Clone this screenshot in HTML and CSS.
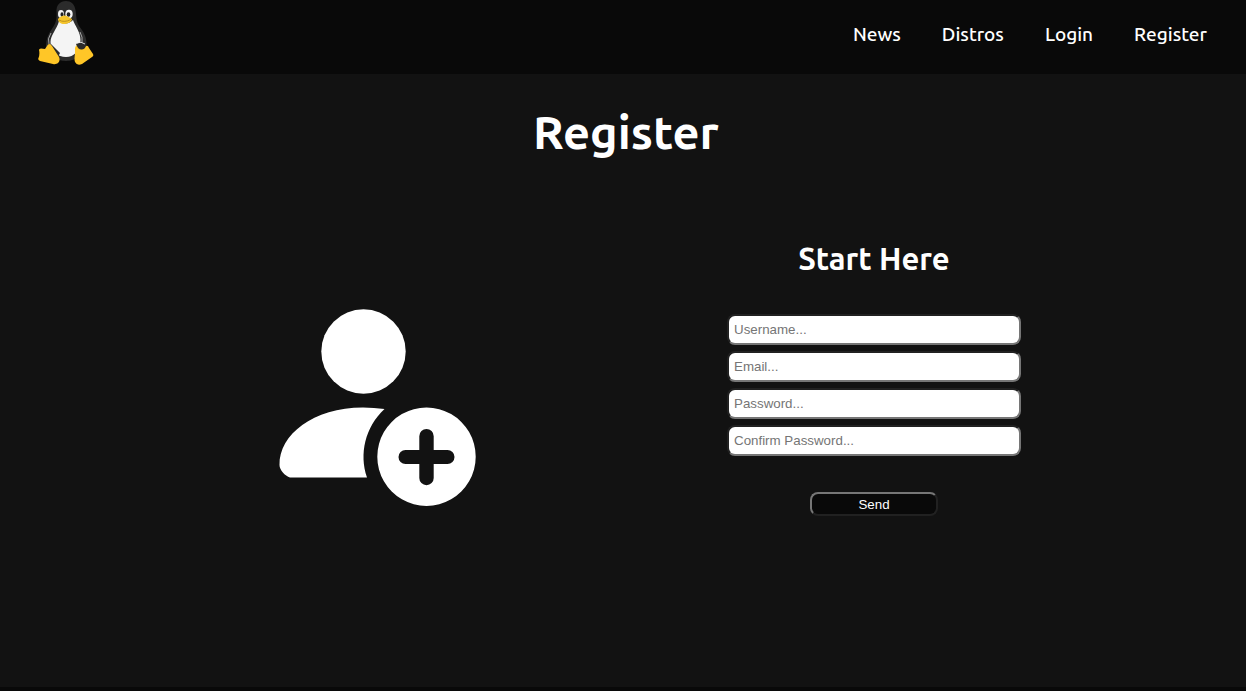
FILE: index.html
```html
<!DOCTYPE html>
<html lang="en">
<head>
  <meta charset="utf-8">
  <meta name="viewport" content="width=device-width, initial-scale=1">
  <title>Register</title>
  <link rel="stylesheet" href="styles.css">
</head>
<body>
  <header class="navbar">
    <a class="logo" href="#" aria-label="Home">
      <svg class="tux" viewBox="0 0 56 64" aria-hidden="true">
        <path fill="#2b2b2b" d="M28 0C22 0 18 4 18.500 11C19 18 18 22 14.500 27C10 33 8 39 8 45C10 55 18 60 28 60C38 60 47 53 48.500 44C49 36 45 30 41 25C38 20 38.500 15 37.500 9C36.500 3 33 0 28 0Z"/>
        <path fill="#f4f4f4" d="M21 20C26 24 31 23 35 19C37 25 42.500 31 42.500 39C42 50 36 56 28 56C20 56 12.500 50 12.500 41C12.500 34 19 28 21 20Z"/>
        <path fill="none" stroke="#ddd" stroke-width=".7" d="M13 32Q9 38 11 43M42 31Q45 36 44 42"/>
        <ellipse cx="23" cy="13" rx="3" ry="4" fill="#f4f4f4"/>
        <ellipse cx="31" cy="13" rx="3.700" ry="4.300" fill="#f4f4f4"/>
        <ellipse cx="24" cy="13.500" rx="1.500" ry="2.200" fill="#222"/>
        <ellipse cx="30.500" cy="13.500" rx="1.800" ry="2.300" fill="#222"/>
        <path fill="#f5c52c" d="M20 18C22 16 24 14.500 27 14.500C29 14.500 32 17 34 18C34 21 29 23 26 23C23 23 20 21 20 18Z"/>
        <path fill="none" stroke="#a37a14" stroke-width=".7" d="M21 19Q26 22 33 18.500"/>
        <path fill="#2b2b2b" d="M13 43L22 52L20 56L12 47Z"/>
        <path fill="#ffc627" d="M1 49Q1 47.500 3 47.500L7 48L10 43.500Q12 42 14 45L21 56C23 61 19 64 15 63L2 60Q-.500 59 .500 57Q2 53 1 49Z"/>
        <path fill="#ffc627" d="M37 47Q38 43 41 45Q45 49 48 45Q50 44 51 47L55 53Q56 55 54 56L44 63Q39 65 37 61Q36 58 37 53Z"/>
        <path fill="#2b2b2b" d="M38 43Q43 40 48 43Q48 48 44 48.500Q40 49 38 43Z"/>
        <path fill="none" stroke="#eee" stroke-width=".9" d="M39 42Q43 40 47 43"/>
      </svg>
    </a>
    <nav class="nav-links">
      <a href="#">News</a>
      <a href="#">Distros</a>
      <a href="#">Login</a>
      <a href="#">Register</a>
    </nav>
  </header>
  <main class="page">
    <h1 class="page-title">Register</h1>
    <div class="columns">
      <svg class="person-add" viewBox="0 0 198 198" role="img" aria-label="Add user">
        <circle cx="84.500" cy="42.500" r="42.200"/>
        <path d="M84 98.500Q95 98.500 105.500 100C86 118 80 145 88 168.500H11C6 167 .500 161 .500 156C0 126 34 98.500 84 98.500Z"/>
        <path fill-rule="evenodd" d="M147.500 98.500a49.200 49.200 0 1 0 .01 0ZM147.500 120a7.200 7.200 0 0 1 7.200 7.200V141H168.500a7 7 0 0 1 0 14H154.700V169a7.200 7.200 0 0 1-14.400 0V155H126.500a7 7 0 0 1 0-14H140.300V127.200a7.200 7.200 0 0 1 7.200-7.200Z"/>
      </svg>
      <form class="register-form">
        <h2 class="form-title">Start Here</h2>
        <input class="field" type="text" placeholder="Username..." aria-label="Username">
        <input class="field" type="email" placeholder="Email..." aria-label="Email">
        <input class="field" type="password" placeholder="Password..." aria-label="Password">
        <input class="field" type="password" placeholder="Confirm Password..." aria-label="Confirm password">
        <button class="send" type="button">Send</button>
      </form>
    </div>
  </main>
  <footer class="footer"></footer>
</body>
</html>
```
FILE: styles.css
```css
* {
  box-sizing: border-box;
}

body {
  display: flex;
  flex-direction: column;
  min-height: 100vh;
  margin: 0;
  background: #121212;
  color: #fff;
  font-family: Ubuntu, "Noto Sans", sans-serif;
}

.navbar {
  display: flex;
  justify-content: space-between;
  align-items: flex-start;
  padding: 0 39px 9px 38px;
  background: #090909;
}

.logo {
  display: block;
  padding-top: 1px;
}

.tux {
  display: block;
  width: 56px;
  height: 64px;
}

.nav-links {
  display: flex;
  gap: 41px;
  padding-top: 20px;
}

.nav-links a {
  color: #fff;
  font-size: 19px;
  font-weight: 500;
  line-height: 28px;
  text-decoration: none;
}

.page {
  flex: 1;
  padding: 22px 0 24px 6px;
}

.page-title {
  margin: 0;
  font-size: 47px;
  line-height: 72px;
  text-align: center;
}

.columns {
  display: grid;
  grid-template-columns: 40% 40%;
  justify-content: center;
  align-items: center;
  padding-top: 67px;
}

.person-add {
  justify-self: center;
  width: 198px;
  height: 198px;
  margin-top: 64px;
  fill: #fff;
}

.register-form {
  display: flex;
  flex-direction: column;
  align-items: center;
  gap: 6px;
}

.form-title {
  margin: 0 0 25px;
  font-size: 31px;
  line-height: 48px;
}

.field {
  width: 294px;
  max-width: 100%;
  height: 31px;
  padding: 1px 5px;
  border: 2px inset #767676;
  border-radius: 8px;
  background: #fff;
  color: #000;
  font-family: "Liberation Sans", sans-serif;
}

.field::placeholder {
  color: #757575;
}

.send {
  width: 128px;
  height: 24px;
  margin-top: 30px;
  padding: 0;
  border: 2px outset #767676;
  border-radius: 8px;
  background: #090909;
  color: #fff;
  font-family: "Liberation Sans", sans-serif;
}

.footer {
  height: 4px;
  background: #090909;
}
```
